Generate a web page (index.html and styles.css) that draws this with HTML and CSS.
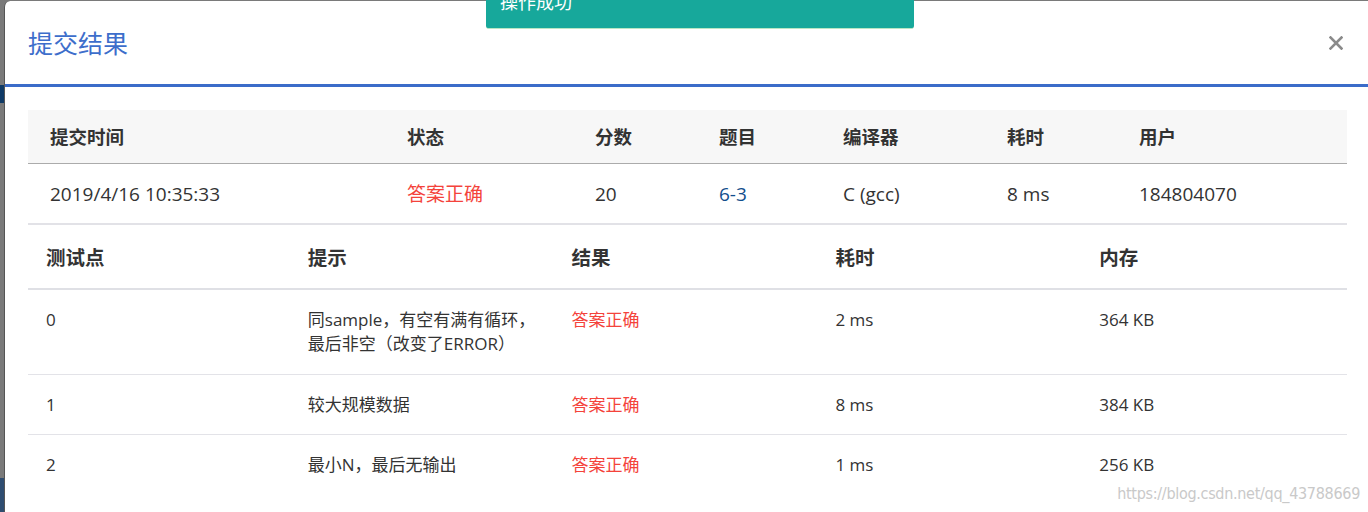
FILE: index.html
```html
<!DOCTYPE html>
<html lang="zh-CN">
<head>
<meta charset="utf-8">
<title>提交结果</title>
<link rel="stylesheet" href="styles.css">
</head>
<body>
<div class="modal">
  <div class="modal-header">
    <h4 class="modal-title">提交结果</h4>
    <button class="close" aria-label="关闭">
      <svg width="14" height="14" viewBox="0 0 14 14"><path d="M1.5 1.5 L12.5 12.5 M12.5 1.5 L1.5 12.5" stroke="#8a8a8a" stroke-width="2.6" stroke-linecap="square"/></svg>
    </button>
  </div>
  <div class="modal-body">
    <table class="tbl summary">
      <thead>
        <tr>
          <th class="c1">提交时间</th>
          <th class="c2">状态</th>
          <th class="c3">分数</th>
          <th class="c4">题目</th>
          <th class="c5">编译器</th>
          <th class="c6">耗时</th>
          <th class="c7">用户</th>
        </tr>
      </thead>
      <tbody>
        <tr>
          <td>2019/4/16 10:35:33</td>
          <td class="ok">答案正确</td>
          <td>20</td>
          <td><a class="link" href="#">6-3</a></td>
          <td>C (gcc)</td>
          <td>8 ms</td>
          <td>184804070</td>
        </tr>
      </tbody>
    </table>
    <table class="tbl cases">
      <thead>
        <tr>
          <th>测试点</th>
          <th>提示</th>
          <th>结果</th>
          <th>耗时</th>
          <th>内存</th>
        </tr>
      </thead>
      <tbody>
        <tr>
          <td>0</td>
          <td>同sample，有空有满有循环，<br>最后非空（改变了ERROR）</td>
          <td class="ok">答案正确</td>
          <td>2 ms</td>
          <td>364 KB</td>
        </tr>
        <tr>
          <td>1</td>
          <td>较大规模数据</td>
          <td class="ok">答案正确</td>
          <td>8 ms</td>
          <td>384 KB</td>
        </tr>
        <tr>
          <td>2</td>
          <td>最小N，最后无输出</td>
          <td class="ok">答案正确</td>
          <td>1 ms</td>
          <td>256 KB</td>
        </tr>
      </tbody>
    </table>
  </div>
</div>
<div class="toast"><span class="toast-text">操作成功</span></div>
<div class="watermark">https://blog.csdn.net/qq_43788669</div>
</body>
</html>
```

FILE: styles.css
```css
html, body {
  margin: 0;
  padding: 0;
  height: 512px;
  overflow: hidden;
}
body {
  font-family: "Open Sans", "Noto Sans CJK SC", sans-serif;
  color: #333;
  background: linear-gradient(to bottom, #7a7a7a 0, #7a7a7a 85px, #0f3a66 85px, #0f3a66 103px, #7a7a7a 103px, #7a7a7a 478px, #2f4d70 478px);
  position: relative;
}
.modal {
  margin: 1px 0 0 4px;
  height: 520px;
  background: #fff;
  border-left: 1px solid #555;
  border-top-left-radius: 6px;
}
.modal-header {
  height: 83px;
  border-bottom: 3px solid #3b6cc9;
  display: flex;
  align-items: center;
  justify-content: space-between;
  padding: 0 24px 0 23px;
  box-sizing: content-box;
}
.modal-title {
  margin: 0 0 2px;
  font-family: "Noto Sans CJK SC", sans-serif;
  font-size: 25px;
  font-weight: 400;
  color: #3d6ecb;
  line-height: 30px;
}
.close {
  border: 0;
  background: none;
  padding: 0;
  width: 14px;
  height: 14px;
  display: flex;
  margin-right: 1px;
}
.modal-body {
  padding: 23px 21px 0 23px;
}
.tbl {
  width: 100%;
  border-collapse: collapse;
  table-layout: fixed;
}
.tbl th, .tbl td {
  text-align: left;
  vertical-align: top;
  white-space: nowrap;
}
.summary th {
  background: #f7f7f7;
  font-size: 18.5px;
  font-weight: 700;
  line-height: 25px;
  padding: 14px 22px;
  border-bottom: 1px solid #ababab;
}
.summary td {
  font-size: 19px;
  line-height: 24px;
  padding: 18px 22px 17px;
  border-bottom: 2px solid #e2e2e7;
}
.summary .c1 { width: 313px; }
.summary .c2 { width: 144px; }
.summary .c3 { width: 80px; }
.summary .c4 { width: 80px; }
.summary .c5 { width: 120px; }
.summary .c6 { width: 88px; }
.cases th {
  font-size: 19.5px;
  font-weight: 700;
  line-height: 24px;
  padding: 21px 16px 18px;
  border-bottom: 2px solid #dfe0e5;
}
.cases th:first-child, .cases td:first-child {
  padding-left: 18px;
}
.cases td {
  font-size: 17px;
  line-height: 24px;
  padding: 18px 16px 17px;
  border-bottom: 1px solid #e3e3e8;
}
.cases tbody tr:first-child td {
  padding-bottom: 18px;
}
.cases tbody tr:last-child td {
  border-bottom: 0;
}
.ok {
  color: #f4433b;
}
.link {
  color: #124e8c;
  text-decoration: none;
}
.toast {
  position: absolute;
  left: 486px;
  top: 0;
  width: 428px;
  height: 28px;
  background: #17a89b;
  border-bottom: 1px solid #b9e6c4;
  border-radius: 0 0 3px 3px;
  overflow: hidden;
}
.toast-text {
  position: absolute;
  left: 14px;
  top: -11px;
  font-family: "Noto Sans CJK SC", sans-serif;
  font-size: 18px;
  line-height: 24px;
  color: #fff;
}
.watermark {
  position: absolute;
  right: 8px;
  top: 484px;
  font-family: "DejaVu Sans Condensed", "Liberation Sans", sans-serif;
  font-size: 16px;
  color: #c9c9c9;
  letter-spacing: -0.3px;
}
```
